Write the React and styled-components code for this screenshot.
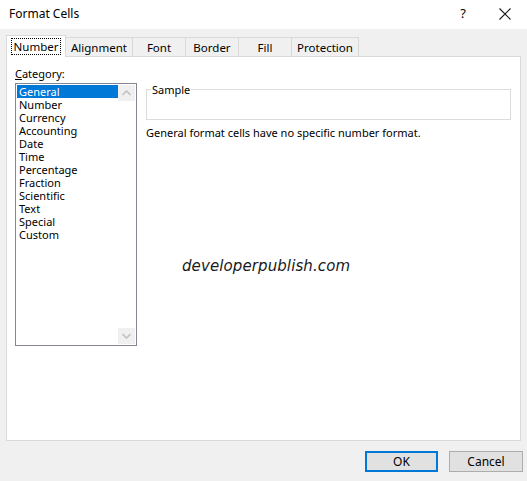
import React, { useState } from 'react'
import styled, { createGlobalStyle } from 'styled-components';

const GlobalStyle = createGlobalStyle`
    html, body {
        margin: 0;
        padding: 0;
        background: #f0f0f0;
    }
    * {
        box-sizing: border-box;
    }
`;

const tabs = ['Number', 'Alignment', 'Font', 'Border', 'Fill', 'Protection'];
const tabWidths = [60, 68, 54, 54, 54, 68];
const categories = ['General', 'Number', 'Currency', 'Accounting', 'Date', 'Time', 'Percentage', 'Fraction', 'Scientific', 'Text', 'Special', 'Custom'];


const App = () => {
    const [activeTab, setActiveTab] = useState(0);
    const [selected, setSelected] = useState(0);

    return (
        <>
            <GlobalStyle />
            <Dialog>
                <TitleBar>
                    <Title>Format Cells</Title>
                    <TitleButtons>
                        <HelpButton>?</HelpButton>
                        <CloseButton>
                            <svg width="12" height="12" viewBox="0 0 12 12">
                                <path d="M0.5 0.5 L11.5 11.5 M11.5 0.5 L0.5 11.5" stroke="#1a1a1a" strokeWidth="1.1" fill="none" />
                            </svg>
                        </CloseButton>
                    </TitleButtons>
                </TitleBar>

                <Body>
                    <TabStrip>
                        {tabs.map((t, i) => (
                            <Tab key={t} $active={i === activeTab} $w={tabWidths[i]} onClick={() => setActiveTab(i)}>
                                <TabLabel $active={i === activeTab}>{t}</TabLabel>
                            </Tab>
                        ))}
                    </TabStrip>

                    <Panel>
                        <LeftCol>
                            <FieldLabel><u>C</u>ategory:</FieldLabel>
                            <ListBox>
                                <Items>
                                    {categories.map((c, i) => (
                                        <Item key={c} $selected={i === selected} onClick={() => setSelected(i)}>{c}</Item>
                                    ))}
                                </Items>
                                <ScrollBar>
                                    <ArrowButton>
                                        <svg width="9" height="6" viewBox="0 0 9 6">
                                            <path d="M0.5 5 L4.5 1 L8.5 5" stroke="#c2c2c2" strokeWidth="1.6" fill="none" />
                                        </svg>
                                    </ArrowButton>
                                    <ArrowButton>
                                        <svg width="9" height="6" viewBox="0 0 9 6">
                                            <path d="M0.5 1 L4.5 5 L8.5 1" stroke="#c2c2c2" strokeWidth="1.6" fill="none" />
                                        </svg>
                                    </ArrowButton>
                                </ScrollBar>
                            </ListBox>
                        </LeftCol>

                        <RightCol>
                            <SampleBox>
                                <legend>Sample</legend>
                            </SampleBox>
                            <Description>General format cells have no specific number format.</Description>
                        </RightCol>

                        <Watermark>developerpublish.com</Watermark>
                    </Panel>
                </Body>

                <Footer>
                    <Button $default>OK</Button>
                    <Button>Cancel</Button>
                </Footer>
            </Dialog>
        </>
    )
}


const Dialog = styled.div`
    width: 527px;
    height: 481px;
    background: #f0f0f0;
    font-family: "Segoe UI", "Noto Sans", "Open Sans", sans-serif;
    font-size: 11px;
    color: #000;
    display: flex;
    flex-direction: column;
    overflow: hidden;
`;

const TitleBar = styled.div`
    height: 29px;
    background: #fff;
    display: flex;
    align-items: center;
    justify-content: space-between;
    padding: 0 16px 0 9px;
`;

const Title = styled.div`
    font-size: 12px;
    color: #000;
    margin-top: -2px;
`;

const TitleButtons = styled.div`
    display: flex;
    align-items: center;
    gap: 33px;
`;

const HelpButton = styled.span`
    font-size: 13px;
    margin-top: -3px;
`;

const CloseButton = styled.span`
    display: flex;
    margin-top: -2px;
`;

const Body = styled.div`
    padding: 7px 6px 0 6px;
    display: flex;
    flex-direction: column;
`;

const TabStrip = styled.div`
    display: flex;
    align-items: flex-end;
    height: 21px;
    position: relative;
    z-index: 1;
    margin-bottom: -1px;
`;

const Tab = styled.div`
    width: ${p => p.$w}px;
    height: ${p => p.$active ? 22 : 20}px;
    background: ${p => p.$active ? '#fff' : '#f0f0f0'};
    border: 1px solid #d9d9d9;
    border-bottom: ${p => p.$active ? 'none' : '1px solid #d9d9d9'};
    margin-left: -1px;
    display: flex;
    justify-content: center;
    align-items: ${p => p.$active ? 'flex-start' : 'center'};
    padding-top: ${p => p.$active ? '2px' : '0'};
    font-size: 11.5px;
    cursor: default;

    &:first-child {
        margin-left: 0;
    }
`;

const TabLabel = styled.span`
    padding: 0 2px;
    line-height: 15px;
    border: 1px dotted ${p => p.$active ? '#000' : 'transparent'};
`;

const Panel = styled.div`
    width: 515px;
    height: 385px;
    background: #fff;
    border: 1px solid #d9d9d9;
    display: flex;
    gap: 9px;
    padding: 9px 8px;
    position: relative;
`;

const LeftCol = styled.div`
    width: 122px;
    display: flex;
    flex-direction: column;
`;

const FieldLabel = styled.div`
    line-height: 15px;
    margin-bottom: 2px;
`;

const ListBox = styled.div`
    height: 263px;
    border: 1px solid #828790;
    display: flex;
    padding: 1px;
`;

const Items = styled.div`
    flex: 1;
    display: flex;
    flex-direction: column;
`;

const Item = styled.div`
    height: 13px;
    line-height: 13px;
    padding-left: 2px;
    background: ${p => p.$selected ? '#0078d7' : 'transparent'};
    color: ${p => p.$selected ? '#fff' : '#000'};
    cursor: default;
`;

const ScrollBar = styled.div`
    width: 17px;
    display: flex;
    flex-direction: column;
    justify-content: space-between;
`;

const ArrowButton = styled.div`
    height: 16px;
    background: #f0f0f0;
    display: flex;
    align-items: center;
    justify-content: center;
`;

const RightCol = styled.div`
    flex: 1;
    display: flex;
    flex-direction: column;
    padding-right: 1px;
    padding-top: 17px;
`;

const SampleBox = styled.fieldset`
    margin: 0;
    height: 37px;
    border: 1px solid #dcdcdc;
    padding: 0;

    legend {
        margin-left: 4px;
        padding: 0 1px;
        line-height: 13px;
    }
`;

const Description = styled.div`
    margin-top: 5px;
    line-height: 15px;
`;

const Watermark = styled.div`
    position: absolute;
    left: 175px;
    top: 200px;
    font-family: "DejaVu Sans", sans-serif;
    font-style: italic;
    font-size: 15px;
    letter-spacing: 0.1px;
    color: #1a1a1a;
`;

const Footer = styled.div`
    display: flex;
    justify-content: flex-end;
    gap: 11px;
    padding: 10px 4px 0 0;
`;

const Button = styled.button`
    width: ${p => p.$default ? 73 : 74}px;
    height: 21px;
    background: #e1e1e1;
    border: ${p => p.$default ? '2px solid #0078d7' : '1px solid #adadad'};
    font-family: "Segoe UI", "Noto Sans", "Open Sans", sans-serif;
    font-size: 12px;
    color: #000;
    padding: 0;
`;


export default App;
